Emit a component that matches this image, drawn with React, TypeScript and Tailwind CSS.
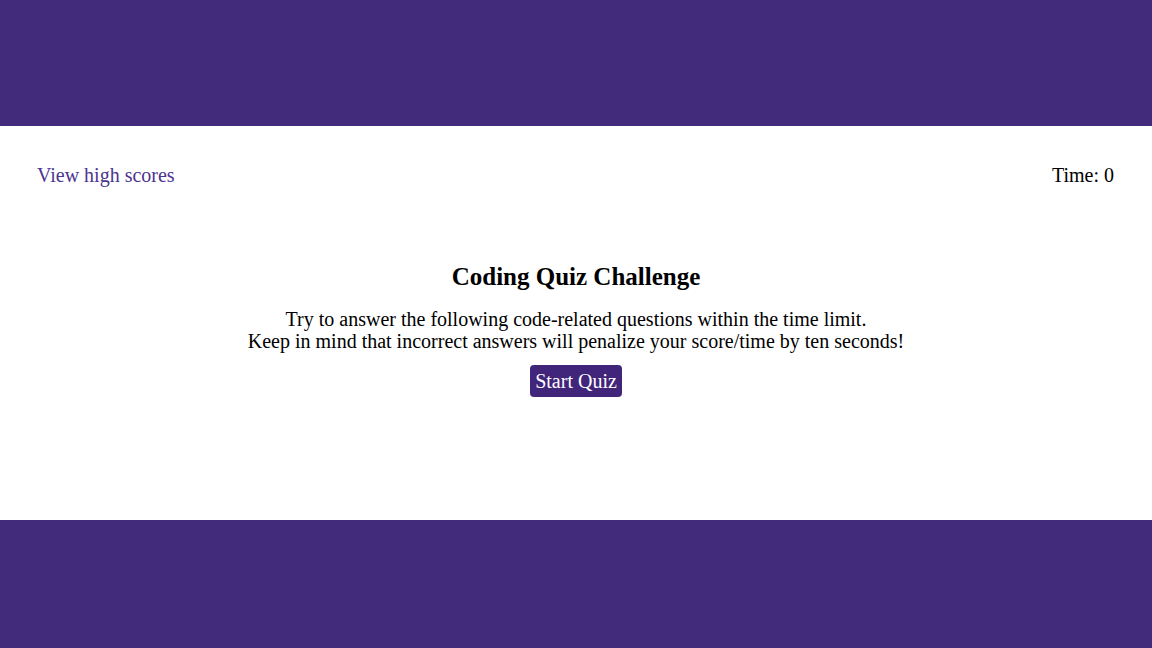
export default function App() {
  return (
    <div className="flex h-[648px] w-full flex-col bg-[#432b7c]" style={{ fontFamily: '"Liberation Serif", "DejaVu Serif", serif' }}>
      <div className="h-[126px] shrink-0" />
      <div className="flex h-[394px] shrink-0 flex-col bg-white">
        <div className="flex items-center justify-between pl-[37px] pr-[38px] pt-[36px] text-[20px] leading-[26px]">
          <a className="text-[#4b3490]">View high scores</a>
          <span className="text-black">Time: 0</span>
        </div>
        <div className="mt-[74px] flex flex-col items-center text-black">
          <h1 className="text-[25px] font-bold leading-[30px]">Coding Quiz Challenge</h1>
          <p className="mt-[16px] text-center text-[20px] leading-[22px]">
            Try to answer the following code-related questions within the time limit.
            <br />
            Keep in mind that incorrect answers will penalize your score/time by ten seconds!
          </p>
          <button className="mt-[13px] h-[32px] w-[92px] rounded-[4px] bg-[#40257a] text-[20px] text-white">Start Quiz</button>
        </div>
      </div>
      <div className="flex-1" />
    </div>
  );
}
